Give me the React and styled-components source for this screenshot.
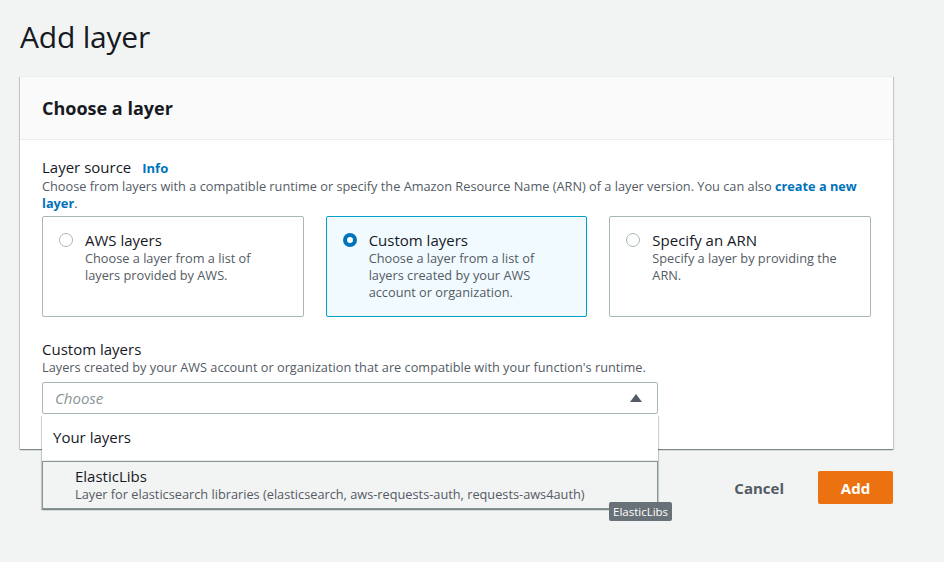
import React from "react";
import styled, { createGlobalStyle } from "styled-components";

const GlobalStyle = createGlobalStyle`
  body {
    margin: 0;
    background: #f2f3f3;
    font-family: "Open Sans", "Noto Sans", sans-serif;
    color: #16191f;
  }
`;

const Page = styled.div`
  width: 873px;
  padding: 16px 20px 40px;
`;

const Title = styled.h1`
  margin: 0 0 18px;
  font-size: 30px;
  font-weight: 400;
  line-height: 42px;
  letter-spacing: -0.2px;
`;

const Panel = styled.div`
  background: #fff;
  box-shadow: 0 1px 1px 0 rgba(0, 28, 36, 0.3), 1px 1px 1px 0 rgba(0, 28, 36, 0.15),
    -1px 1px 1px 0 rgba(0, 28, 36, 0.15);
  border-top: 1px solid #eaeded;
`;

const PanelHeader = styled.div`
  background: #fafafa;
  border-bottom: 1px solid #eaeded;
  padding: 20px 22px;
  h2 {
    margin: 0;
    font-size: 18px;
    font-weight: 700;
    line-height: 22px;
  }
`;

const PanelBody = styled.div`
  padding: 18px 22px 35px;
`;

const Label = styled.div`
  font-size: 15px;
  line-height: 19px;
  display: flex;
  align-items: baseline;
  gap: 11px;
`;

const InfoLink = styled.a`
  color: #0073bb;
  font-weight: 700;
  font-size: 13px;
`;

const Desc = styled.div`
  font-size: 12.75px;
  line-height: 17px;
  color: #545b64;
  a {
    color: #0073bb;
    font-weight: 700;
    text-decoration: none;
  }
`;

const Tiles = styled.div`
  display: grid;
  grid-template-columns: repeat(3, 1fr);
  gap: 22px;
  margin: 4px 0 23px;
`;

const Tile = styled.div`
  height: 101px;
  box-sizing: border-box;
  border: 1px solid ${({ selected }) => (selected ? "#00a1c9" : "#aab7b8")};
  background: ${({ selected }) => (selected ? "#f1faff" : "#fff")};
  border-radius: 2px;
  padding: 13px 22px 0 16px;
  display: flex;
  gap: 12px;
`;

const Radio = styled.span`
  flex: none;
  width: 14px;
  height: 14px;
  margin-top: 3px;
  border-radius: 50%;
  box-sizing: border-box;
  border: ${({ checked }) => (checked ? "4px solid #0073bb" : "1px solid #aab7b8")};
  background: #fff;
`;

const TileText = styled.div`
  flex: 1;
  strong {
    display: block;
    font-weight: 400;
    font-size: 15px;
    line-height: 20px;
  }
`;

const SelectWrap = styled.div`
  position: relative;
  width: 616px;
  margin-top: 6px;
`;

const SelectBox = styled.div`
  height: 32px;
  box-sizing: border-box;
  border: 1px solid #aab7b8;
  border-radius: 2px;
  display: flex;
  align-items: center;
  justify-content: space-between;
  padding: 0 15px 0 12px;
  span {
    font-style: italic;
    color: #879596;
    font-size: 15px;
  }
`;

const Caret = styled.span`
  width: 0;
  height: 0;
  border-left: 6px solid transparent;
  border-right: 6px solid transparent;
  border-bottom: 8px solid #545b64;
`;

const Dropdown = styled.div`
  position: absolute;
  top: 33px;
  left: 0;
  right: 0;
  background: #fff;
  box-shadow: 0 1px 1px 0 rgba(0, 28, 36, 0.3), 1px 1px 1px 0 rgba(0, 28, 36, 0.15),
    -1px 1px 1px 0 rgba(0, 28, 36, 0.15);
  z-index: 2;
`;

const GroupLabel = styled.div`
  padding: 13px 11px;
  font-size: 15px;
  line-height: 19px;
  border-bottom: 1px solid #eaeded;
`;

const Option = styled.div`
  background: #f2f3f3;
  border: 1px solid #879596;
  padding: 4px 32px 5px;
  strong {
    display: block;
    font-weight: 400;
    font-size: 15px;
    line-height: 20px;
  }
`;

const Tooltip = styled.div`
  position: absolute;
  left: 567px;
  top: 120px;
  background: #687078;
  color: #fff;
  font-size: 11.5px;
  line-height: 19px;
  padding: 0 4px;
  border-radius: 2px;
  z-index: 3;
`;

const Actions = styled.div`
  display: flex;
  justify-content: flex-end;
  align-items: center;
  gap: 34px;
  margin-top: 22px;
`;

const LinkButton = styled.button`
  border: none;
  background: none;
  font-family: inherit;
  font-size: 15px;
  font-weight: 700;
  color: #545b64;
  padding: 0;
`;

const PrimaryButton = styled.button`
  border: none;
  background: #ec7211;
  color: #fff;
  font-family: inherit;
  font-size: 15px;
  font-weight: 700;
  height: 33px;
  width: 75px;
  border-radius: 2px;
`;

const tiles = [
  { title: "AWS layers", desc: "Choose a layer from a list of layers provided by AWS." },
  {
    title: "Custom layers",
    desc: "Choose a layer from a list of layers created by your AWS account or organization.",
    selected: true,
  },
  { title: "Specify an ARN", desc: "Specify a layer by providing the ARN." },
];

export default function App() {
  return (
    <Page>
      <GlobalStyle />
      <Title>Add layer</Title>
      <Panel>
        <PanelHeader>
          <h2>Choose a layer</h2>
        </PanelHeader>
        <PanelBody>
          <Label>
            Layer source <InfoLink>Info</InfoLink>
          </Label>
          <Desc>
            Choose from layers with a compatible runtime or specify the Amazon Resource Name (ARN) of a
            layer version. You can also <a href="#">create a new layer</a>.
          </Desc>
          <Tiles>
            {tiles.map((t) => (
              <Tile key={t.title} selected={t.selected}>
                <Radio checked={t.selected} />
                <TileText>
                  <strong>{t.title}</strong>
                  <Desc>{t.desc}</Desc>
                </TileText>
              </Tile>
            ))}
          </Tiles>
          <Label>Custom layers</Label>
          <Desc>
            Layers created by your AWS account or organization that are compatible with your function's
            runtime.
          </Desc>
          <SelectWrap>
            <SelectBox>
              <span>Choose</span>
              <Caret />
            </SelectBox>
            <Dropdown>
              <GroupLabel>Your layers</GroupLabel>
              <Option>
                <strong>ElasticLibs</strong>
                <Desc>
                  Layer for elasticsearch libraries (elasticsearch, aws-requests-auth, requests-aws4auth)
                </Desc>
              </Option>
            </Dropdown>
            <Tooltip>ElasticLibs</Tooltip>
          </SelectWrap>
        </PanelBody>
      </Panel>
      <Actions>
        <LinkButton>Cancel</LinkButton>
        <PrimaryButton>Add</PrimaryButton>
      </Actions>
    </Page>
  );
}
